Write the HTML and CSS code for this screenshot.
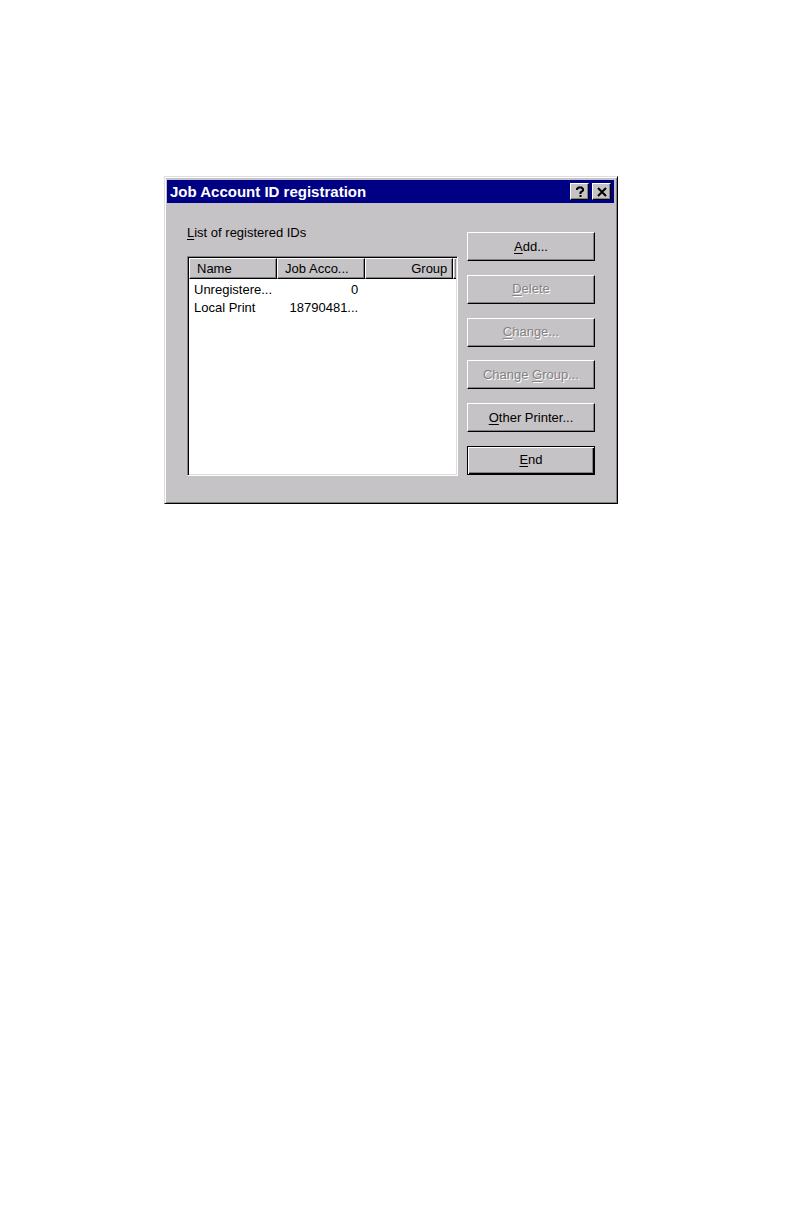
FILE: index.html
```html
<!DOCTYPE html>
<html lang="en">
<head>
<meta charset="utf-8">
<meta name="viewport" content="width=device-width, initial-scale=1">
<title>Job Account ID registration</title>
<link rel="stylesheet" href="styles.css">
</head>
<body>
<main class="dialog" role="dialog" aria-labelledby="dialog-title">
  <header class="titlebar">
    <h1 class="title" id="dialog-title">Job Account ID registration</h1>
    <button class="caption-button" type="button" aria-label="Help">
      <svg class="icon" viewBox="0 0 12 12" aria-hidden="true"><path d="M3 4V3L4.500 1.500H7.500L9 3V4.500L6.500 6.500V8M6.500 9V11" fill="none" stroke="#000" stroke-width="2"/></svg>
    </button>
    <button class="caption-button" type="button" aria-label="Close">
      <svg class="icon" viewBox="0 0 12 12" aria-hidden="true"><path d="M2 2L10 10M10 2L2 10" fill="none" stroke="#000" stroke-width="2"/></svg>
    </button>
  </header>
  <div class="content">
    <section class="list-pane">
      <h2 class="list-label" id="list-label"><u>L</u>ist of registered IDs</h2>
      <div class="list">
        <table class="table" aria-labelledby="list-label">
          <colgroup><col class="col"><col class="col"><col class="col"><col></colgroup>
          <thead>
            <tr><th>Name</th><th>Job Acco...</th><th class="number">Group</th><td class="filler"></td></tr>
          </thead>
          <tbody>
            <tr><td>Unregistere...</td><td class="number">0</td><td></td><td></td></tr>
            <tr><td>Local Print</td><td class="number">18790481...</td><td></td><td></td></tr>
          </tbody>
        </table>
      </div>
    </section>
    <div class="actions">
      <button class="button" type="button"><span><u>A</u>dd...</span></button>
      <button class="button" type="button" disabled><span><u>D</u>elete</span></button>
      <button class="button" type="button" disabled><span><u>C</u>hange...</span></button>
      <button class="button" type="button" disabled><span>Change <u>G</u>roup...</span></button>
      <button class="button" type="button"><span><u>O</u>ther Printer...</span></button>
      <button class="button default" type="button"><span><u>E</u>nd</span></button>
    </div>
  </div>
</main>
</body>
</html>
```
FILE: styles.css
```css
* {
  box-sizing: border-box;
}

body {
  margin: 0;
  padding: 176px 174px 24px 164px;
  background: #fff;
  color: #000;
  font: 13px/18px "Liberation Sans", Arial, sans-serif;
}

.dialog {
  padding: 3px 3px 27px 2px;
  background: #c6c3c6;
  border: 1px solid;
  border-color: #dedede #000 #000 #dedede;
  box-shadow: inset 1px 1px #fff, inset -1px -1px #848284;
}

.titlebar {
  display: flex;
  align-items: center;
  gap: 3px;
  height: 23px;
  padding: 0 3px;
  background: #000084;
}

.title {
  flex: 1;
  margin: 0;
  color: #fff;
  font-size: 15px;
  font-weight: bold;
}

.caption-button {
  display: flex;
  align-items: center;
  justify-content: center;
  width: 19px;
  height: 17px;
  padding: 0;
  background: #c6c3c6;
  border: 1px solid;
  border-color: #fff #000 #000 #fff;
  box-shadow: inset -1px -1px #848284;
}

.icon {
  width: 12px;
  height: 12px;
}

.content {
  display: flex;
  gap: 9px;
  padding: 21px 19px 0 20px;
}

.list-pane {
  flex: 1;
  display: flex;
  flex-direction: column;
  min-width: 0;
}

.list-label {
  margin: 0 0 14px;
  font-size: 13px;
  font-weight: normal;
}

.list {
  min-height: 220px;
  background: #fff;
  border: 1px solid;
  border-color: #848284 #fff #fff #848284;
  box-shadow: inset 1px 1px #000, inset -1px -1px #dedede;
  padding: 1px;
}

.table {
  width: 100%;
  table-layout: fixed;
  border-collapse: separate;
  border-spacing: 0;
}

.col {
  width: 33%;
}

th,
td {
  padding: 0 7px 0 5px;
  font-weight: normal;
  line-height: 18px;
  text-align: left;
  white-space: nowrap;
}

th,
.filler {
  height: 21px;
  padding: 0 5px 0 7px;
  background: #c6c3c6;
  border: 1px solid;
  border-color: #fff #000 #000 #fff;
  box-shadow: inset -1px -1px #848284;
}

.filler {
  padding: 0;
  border-right: 0;
}

tbody tr:first-child td {
  padding-top: 2px;
}

.number {
  text-align: right;
}

.actions {
  display: flex;
  flex-direction: column;
  justify-content: space-between;
  width: 128px;
  padding: 8px 0 1px;
}

.button {
  height: 29px;
  padding: 0;
  background: #c6c3c6;
  border: 1px solid;
  border-color: #fff #000 #000 #fff;
  box-shadow: inset -1px -1px #848284;
  color: #000;
  font: inherit;
}

.button:disabled {
  color: #848284;
  text-shadow: 1px 1px #fff;
}

.default {
  border-color: #000;
  box-shadow: inset 1px 1px #fff, inset -1px -1px #000, inset -2px -2px #848284;
}

u {
  text-underline-offset: 2px;
}
```
